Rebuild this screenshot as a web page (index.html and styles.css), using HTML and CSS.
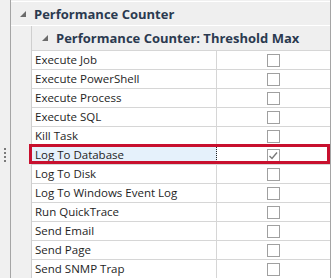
FILE: index.html
```html
<!DOCTYPE html>
<html>
<head>
<meta charset="utf-8">
<link rel="stylesheet" href="styles.css">
</head>
<body>
<div class="grip"><span></span><span></span><span></span><span></span></div>
<div class="main">
  <div class="hdr1">
    <svg class="tri" width="6" height="6" viewBox="0 0 6 6"><polygon points="6,0 6,6 0,6" fill="#6b6b6b"/></svg>
    <span>Performance Counter</span>
  </div>
  <div class="group">
    <div class="indent"></div>
    <div class="gbody">
      <div class="hdr2">
        <svg class="tri" width="6" height="6" viewBox="0 0 6 6"><polygon points="6,0 6,6 0,6" fill="#6b6b6b"/></svg>
        <span>Performance Counter: Threshold Max</span>
      </div>
      <div class="row"><div class="name">Execute Job</div><div class="val"><span class="cb"></span></div></div>
      <div class="row"><div class="name">Execute PowerShell</div><div class="val"><span class="cb"></span></div></div>
      <div class="row"><div class="name">Execute Process</div><div class="val"><span class="cb"></span></div></div>
      <div class="row"><div class="name">Execute SQL</div><div class="val"><span class="cb"></span></div></div>
      <div class="row"><div class="name">Kill Task</div><div class="val"><span class="cb"></span></div></div>
      <div class="row sel"><div class="name">Log To Database</div><div class="val"><span class="cb"><svg width="11" height="11" viewBox="0 0 11 11"><polyline points="1.5,6 4,8.5 9,2.5" fill="none" stroke="#7a7a7a" stroke-width="1.4"/></svg></span></div></div>
      <div class="row"><div class="name">Log To Disk</div><div class="val"><span class="cb"></span></div></div>
      <div class="row"><div class="name">Log To Windows Event Log</div><div class="val"><span class="cb"></span></div></div>
      <div class="row"><div class="name">Run QuickTrace</div><div class="val"><span class="cb"></span></div></div>
      <div class="row"><div class="name">Send Email</div><div class="val"><span class="cb"></span></div></div>
      <div class="row"><div class="name">Send Page</div><div class="val"><span class="cb"></span></div></div>
      <div class="row"><div class="name">Send SNMP Trap</div><div class="val"><span class="cb"></span></div></div>
    </div>
  </div>
</div>
<div class="highlight"></div>
</body>
</html>
```
FILE: styles.css
```css
html, body {
  margin: 0;
  padding: 0;
}
body {
  width: 331px;
  height: 278px;
  overflow: hidden;
  display: flex;
  background: #f0f0f0;
  position: relative;
  font-family: "Open Sans", "Noto Sans", sans-serif;
  font-size: 11.5px;
  color: #1e1e1e;
}
.grip {
  width: 10px;
  display: flex;
  flex-direction: column;
  align-items: center;
  gap: 2px;
  padding-top: 148px;
  box-sizing: border-box;
}
.grip span {
  width: 2px;
  height: 2px;
  background: #7a7a7a;
}
.main {
  width: 319px;
  border-left: 1px solid #a5a5a5;
  border-right: 1px solid #a5a5a5;
  padding-top: 1px;
  display: flex;
  flex-direction: column;
}
.hdr1 {
  height: 23px;
  border-top: 1px solid #ffffff;
  border-bottom: 1px solid #ffffff;
  background: #efefef;
  display: flex;
  align-items: center;
  padding-left: 9px;
  font-weight: 700;
  font-size: 13px;
  color: #2b3a50;
}
.hdr1 .tri {
  margin-right: 8px;
}
.group {
  display: flex;
  flex: 1;
}
.indent {
  width: 20px;
  border-right: 1px solid #cfcfcf;
}
.gbody {
  width: 298px;
  display: flex;
  flex-direction: column;
}
.hdr2 {
  height: 24px;
  background: #efefef;
  display: flex;
  align-items: center;
  padding-left: 10px;
  font-weight: 700;
  font-size: 13px;
  color: #2b3a50;
}
.hdr2 .tri {
  margin-right: 8px;
}
.row {
  display: flex;
  height: 18px;
  border-top: 1px solid #d6d6d6;
  background: #ffffff;
  flex-shrink: 0;
}
.name {
  width: 185px;
  padding-left: 3px;
  box-sizing: border-box;
  border-right: 1px solid #d6d6d6;
  line-height: 18px;
  white-space: nowrap;
  overflow: hidden;
}
.val {
  flex: 1;
  display: flex;
  align-items: center;
  justify-content: center;
}
.cb {
  width: 11px;
  height: 11px;
  border: 1px solid #a0a0a0;
  background: #ffffff;
  display: flex;
}
.sel .name {
  background: #e5f1fb;
  border-right: 1px dotted #222222;
}
.highlight {
  position: absolute;
  left: 29px;
  top: 144px;
  width: 301px;
  height: 20px;
  box-sizing: border-box;
  border: 3px solid #c8102e;
}
```
